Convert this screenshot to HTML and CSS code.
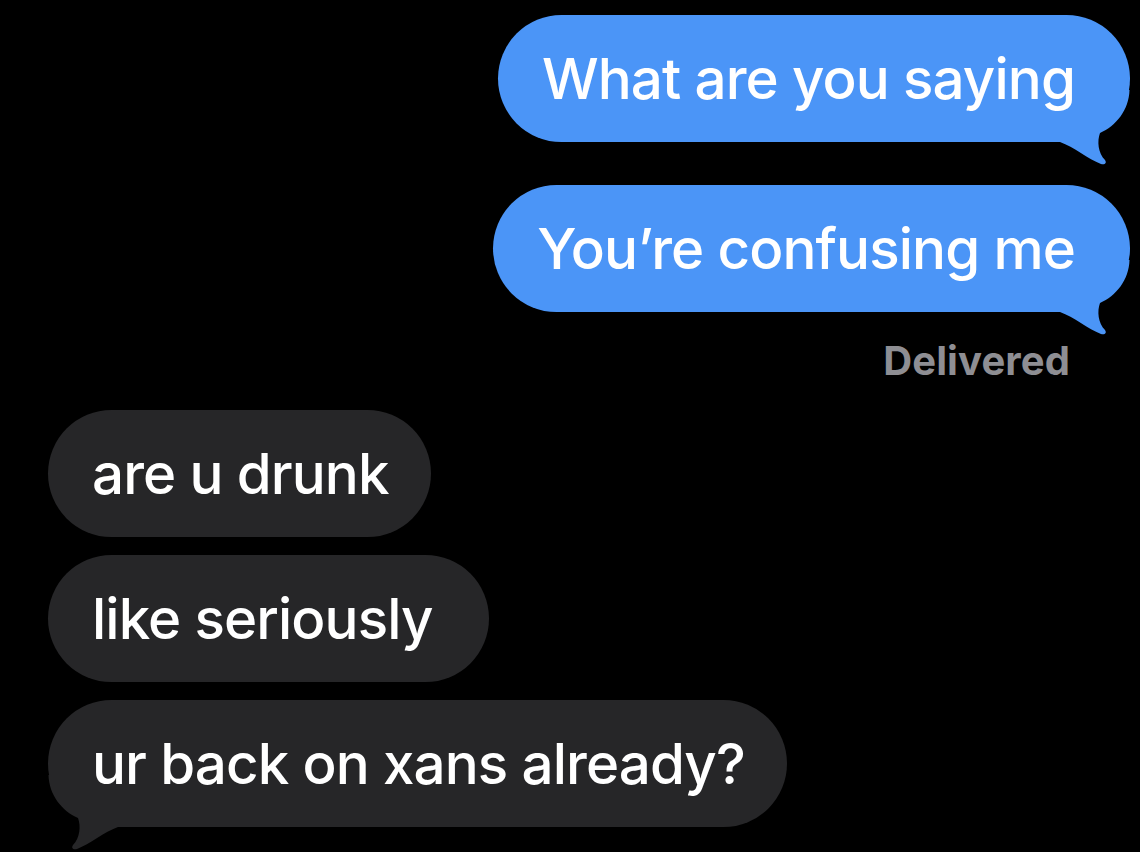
FILE: index.html
```html
<!DOCTYPE html>
<html lang="en">
<head>
    <meta charset="UTF-8">
    <meta name="viewport" content="width=device-width, initial-scale=1.0">
    <title>Messages</title>
    <link rel="stylesheet" href="styles.css">
</head>
<body>
    <div class="thread">
        <div class="bubble sent">
            <span class="text">What are you saying</span>
            <svg class="tail" viewBox="0 0 70 75" width="70" height="75"><path d="M0 52 L0 0 L69.5 0 C69 20 56 36 40 43 C37 51 38 63 45 70 C47 73 45 75 41 74 C28 69 14 57 0 52 Z"/></svg>
        </div>
        <div class="bubble sent">
            <span class="text">You’re confusing me</span>
            <svg class="tail" viewBox="0 0 70 75" width="70" height="75"><path d="M0 52 L0 0 L69.5 0 C69 20 56 36 40 43 C37 51 38 63 45 70 C47 73 45 75 41 74 C28 69 14 57 0 52 Z"/></svg>
        </div>
        <div class="status">Delivered</div>

        <div class="bubble received"><span class="text">are u drunk</span></div>
        <div class="bubble received roomy"><span class="text">like seriously</span></div>
        <div class="bubble received">
            <span class="text">ur back on xans already?</span>
            <svg class="tail" viewBox="0 0 70 75" width="70" height="75"><path d="M0 52 L0 0 L69.5 0 C69 20 56 36 40 43 C37 51 38 63 45 70 C47 73 45 75 41 74 C28 69 14 57 0 52 Z"/></svg>
        </div>
    </div>
</body>
</html>
```

FILE: styles.css
```css
:root {
    --sent: #4b95f7;
    --received: #262628;
    --muted: #8e8e93;
}

body {
    margin: 0;
    background: #000000;
    font-family: 'Inter', 'Roboto', sans-serif;
    color: #ffffff;
    height: 852px;
    overflow: hidden;
}

.thread {
    display: flex;
    flex-direction: column;
    padding-top: 15px;
}

.bubble {
    position: relative;
    font-size: 56.5px;
    font-weight: 500;
    letter-spacing: -0.9px;
    line-height: 127px;
    height: 127px;
    padding: 0 44px;
    border-radius: 64px;
    white-space: nowrap;
}

.text {
    position: relative;
    z-index: 1;
}

.sent {
    align-self: flex-end;
    margin-right: 10px;
    background: var(--sent);
    padding-right: 55px;
    margin-bottom: 43px;
}

.received {
    align-self: flex-start;
    margin-left: 48px;
    background: var(--received);
    padding-right: 42px;
    margin-bottom: 18px;
}

.received.roomy {
    padding-right: 56px;
}

.tail {
    position: absolute;
    bottom: -23px;
    right: 0;
}

.sent .tail path {
    fill: var(--sent);
}

.received .tail {
    right: auto;
    left: 0;
    bottom: -23px;
    transform: scaleX(-1);
}

.received .tail path {
    fill: var(--received);
}

.status {
    align-self: flex-end;
    margin: -14px 70px 0 0;
    height: 69px;
    font-size: 40px;
    font-weight: 700;
    letter-spacing: 0.1px;
    color: var(--muted);
    line-height: 40px;
}
```
